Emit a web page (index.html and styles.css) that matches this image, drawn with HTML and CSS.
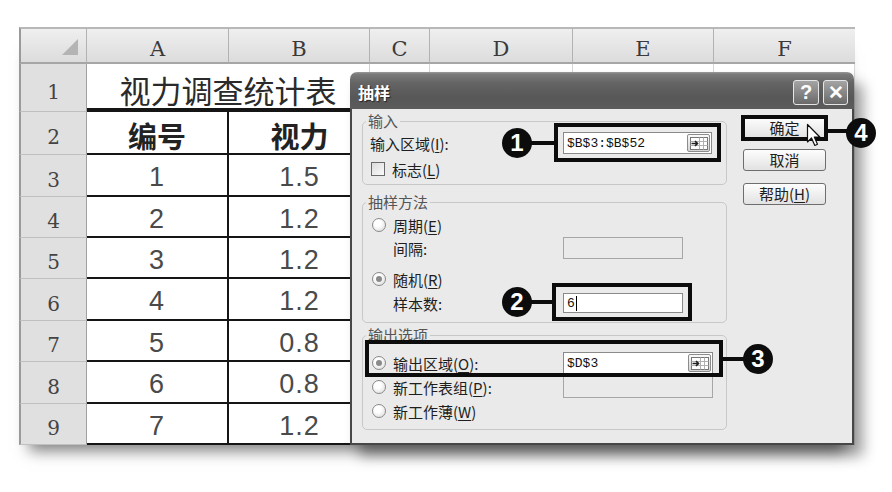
FILE: index.html
```html
<!DOCTYPE html>
<html lang="zh-CN">
<head>
<meta charset="utf-8">
<title>抽样</title>
<link rel="stylesheet" href="styles.css">
</head>
<body>
<div class="page">
  <div class="sheet">
    <div class="corner"><span class="tri"></span></div>
    <div class="ch">A</div><div class="ch">B</div><div class="ch">C</div><div class="ch">D</div><div class="ch">E</div><div class="ch last">F</div>

    <div class="rh">1</div>
    <div class="title">视力调查统计表</div>
    <div class="e"></div><div class="e"></div><div class="e"></div><div class="e"></div>

    <div class="rh">2</div>
    <div class="c ca hd">编号</div><div class="c hd">视力</div>
    <div class="e"></div><div class="e"></div><div class="e"></div><div class="e"></div>

    <div class="rh">3</div>
    <div class="c ca num">1</div><div class="c num">1.5</div>
    <div class="e"></div><div class="e"></div><div class="e"></div><div class="e"></div>

    <div class="rh">4</div>
    <div class="c ca num">2</div><div class="c num">1.2</div>
    <div class="e"></div><div class="e"></div><div class="e"></div><div class="e"></div>

    <div class="rh">5</div>
    <div class="c ca num">3</div><div class="c num">1.2</div>
    <div class="e"></div><div class="e"></div><div class="e"></div><div class="e"></div>

    <div class="rh">6</div>
    <div class="c ca num">4</div><div class="c num">1.2</div>
    <div class="e"></div><div class="e"></div><div class="e"></div><div class="e"></div>

    <div class="rh">7</div>
    <div class="c ca num">5</div><div class="c num">0.8</div>
    <div class="e"></div><div class="e"></div><div class="e"></div><div class="e"></div>

    <div class="rh">8</div>
    <div class="c ca num">6</div><div class="c num">0.8</div>
    <div class="e"></div><div class="e"></div><div class="e"></div><div class="e"></div>

    <div class="rh">9</div>
    <div class="c ca num">7</div><div class="c num">1.2</div>
    <div class="e"></div><div class="e"></div><div class="e"></div><div class="e"></div>
  </div>

  <div class="dialog">
    <div class="tbar">
      <span class="dtitle">抽样</span>
      <div class="tbtns"><span class="tbtn">?</span><span class="tbtn x">✕</span></div>
    </div>
    <div class="dbody">
      <div class="groups">
        <fieldset class="g g1">
          <legend>输入</legend>
          <div class="row h28"><span class="lab">输入区域(<u>I</u>):</span><span class="tb w149"><span class="val">$B$3:$B$52</span><span class="rb"><svg width="18" height="13" viewBox="0 0 18 13"><rect x="0.5" y="0.5" width="17" height="12" fill="#fff" stroke="#777"/><path d="M0.5 4.5h17M0.5 8.5h17M9.5 .5v12M13.5 .5v12" stroke="#b0b0b0" fill="none"/><path d="M1.5 6.5h5.5M5 4l2.5 2.5L5 9" stroke="#222" stroke-width="1.6" fill="none"/></svg></span></span></div>
          <div class="row h24"><span class="chk"></span><span>标志(<u>L</u>)</span></div>
        </fieldset>
        <fieldset class="g g2">
          <legend>抽样方法</legend>
          <div class="row h24"><span class="radio"></span><span>周期(<u>E</u>)</span></div>
          <div class="row h22"><span class="lab ind">间隔:</span><span class="tb dis w120"></span></div>
          <div class="row h24 mt8"><span class="radio on"></span><span>随机(<u>R</u>)</span></div>
          <div class="row h24"><span class="lab ind">样本数:</span><span class="tb w120 h20"><span class="val">6</span><span class="caret"></span></span></div>
        </fieldset>
        <fieldset class="g g3">
          <legend>输出选项</legend>
          <div class="row h24"><span class="lab"><span class="radio on"></span>输出区域(<u>O</u>):</span><span class="tb w150"><span class="val">$D$3</span><span class="rb"><svg width="18" height="13" viewBox="0 0 18 13"><rect x="0.5" y="0.5" width="17" height="12" fill="#fff" stroke="#777"/><path d="M0.5 4.5h17M0.5 8.5h17M9.5 .5v12M13.5 .5v12" stroke="#b0b0b0" fill="none"/><path d="M1.5 6.5h5.5M5 4l2.5 2.5L5 9" stroke="#222" stroke-width="1.6" fill="none"/></svg></span></span></div>
          <div class="row h24"><span class="lab"><span class="radio"></span>新工作表组(<u>P</u>):</span><span class="tb dis w150"></span></div>
          <div class="row h24"><span class="radio"></span><span>新工作薄(<u>W</u>)</span></div>
        </fieldset>
      </div>
      <div class="btns">
        <span class="btn">确定</span>
        <span class="btn">取消</span>
        <span class="btn b3rd">帮助(<u>H</u>)</span>
      </div>
    </div>
  </div>

  <div class="box b1"></div><div class="ln l1"></div><div class="mark n1">1</div>
  <div class="box b2"></div><div class="ln l2"></div><div class="mark n2">2</div>
  <div class="box b3"></div><div class="ln l3"></div><div class="mark n3">3</div>
  <div class="box b4"></div><div class="ln l4"></div><div class="mark n4">4</div>
  <svg class="cursor" width="16" height="26" viewBox="0 0 16 26"><path d="M1.5 1.5 L1.5 19 L5.5 15 L8.8 22.5 L11.5 21.3 L8.3 14 L13.8 14 Z" fill="#fff" stroke="#111" stroke-width="1.2" stroke-linejoin="round"/></svg>
</div>
</body>
</html>
```

FILE: styles.css
```css
* { box-sizing: border-box; margin: 0; padding: 0; }
html, body { width: 892px; height: 492px; overflow: hidden; background: #fff; }
body { font-family: "Noto Sans CJK SC", "Noto Sans", sans-serif; color: #222; }

.page { position: relative; width: 892px; height: 492px; padding: 27px 0 0 19px; }

/* spreadsheet */
.sheet {
  width: 836px;
  display: grid;
  grid-template-columns: 68px 142px 141px 60px 143px 141px 141px;
  grid-template-rows: 37px 48px 43px 42px 41px 41px 42px 41px 42px 41px;
  box-shadow: 0 16px 14px -10px rgba(0,0,0,.5);
}
.corner, .ch {
  background: linear-gradient(#efefef, #dcdcdc);
  border-top: 2px solid #b8b8b8;
  border-bottom: 2px solid #a6a6a6;
  border-right: 1px solid #b2b2b2;
}
.corner { border-left: 2px solid #9a9a9a; display: flex; justify-content: flex-end; align-items: flex-end; padding: 0 8px 7px 0; }
.tri { width: 16px; height: 16px; background: #b4b4b4; clip-path: polygon(100% 0, 100% 100%, 0 100%); }
.ch { display: flex; justify-content: center; align-items: center; padding-top: 7px; font: 21px "DejaVu Serif", "Liberation Serif", serif; color: #3a3a3a; }
.ch.last { border-right: 0; }
.rh {
  background: #e0e0e0;
  border-left: 2px solid #9a9a9a;
  border-right: 1px solid #a0a0a0;
  border-bottom: 1px solid #c0c0c0;
  display: flex; justify-content: center; align-items: center;
  padding-top: 8px;
  font: 20px "DejaVu Serif", "Liberation Serif", serif; color: #444;
}
.title {
  grid-column: span 2;
  border-bottom: 4px solid #151515;
  border-right: 1px solid #d0d0d0;
  display: flex; justify-content: center; align-items: center;
  padding-top: 6px;
  font-size: 31px; color: #2a2a2a;
}
.e { border-right: 1px solid #d6d6d6; border-bottom: 1px solid #d6d6d6; }
.c { border-bottom: 2px solid #151515; display: flex; justify-content: center; align-items: center; padding-top: 5px; }
.ca { border-right: 2px solid #151515; }
.hd { font-size: 29px; font-weight: 700; color: #222; }
.num { font: 27px "Liberation Sans", sans-serif; color: #4a4a4a; letter-spacing: 1px; }

/* dialog */
.dialog {
  position: absolute; left: 350px; top: 72px; width: 504px; height: 373px;
  display: flex; flex-direction: column;
  border-radius: 7px 7px 0 0;
  box-shadow: 9px 11px 14px rgba(0,0,0,.38);
}
.tbar {
  height: 37px; flex: none;
  display: flex; justify-content: space-between; align-items: flex-start;
  padding: 8px 6px 0 8px;
  border-radius: 7px 7px 0 0;
  background: linear-gradient(#9a9a9a 0, #7a7a7a 6%, #646464 30%, #575757 70%, #5c5c5c 100%);
}
.dtitle { font-size: 16px; font-weight: 700; line-height: 25px; color: #fff; text-shadow: 1px 1px 1px #222; }
.tbtns { display: flex; gap: 4px; }
.tbtn {
  width: 26px; height: 25px;
  border: 1px solid #e6e6e6; border-radius: 3px;
  background: linear-gradient(#a4a4a4, #6a6a6a);
  color: #fff; font: 700 20px/23px "Liberation Sans", sans-serif; text-align: center;
}
.tbtn.x { width: 25px; font-size: 19px; }
.dbody {
  flex: 1; display: flex; gap: 16px;
  padding: 4px 0 0 10px;
  background: #eaeaea;
  border: 2px solid #474747; border-top: 0;
}
.groups { width: 365px; flex: none; }
.g { border: 1px solid #c8c8c8; border-radius: 5px; padding: 0 7px; min-width: 0; }
.g legend { font-size: 15px; line-height: 16px; color: #555; padding: 0 2px; margin-left: -4px; }
.g1 { padding-bottom: 3px; }
.g2 { margin-top: 9px; padding-top: 3px; padding-bottom: 7px; }
.g3 { margin-top: 4px; padding-top: 8px; padding-bottom: 6px; }
.row { display: flex; align-items: center; font-size: 15px; color: #1e1e1e; white-space: nowrap; }
.h28 { height: 28px; }
.h24 { height: 24px; }
.h22 { height: 22px; }
.mt8 { margin-top: 8px; }
.lab { width: 193px; flex: none; display: flex; align-items: center; }
.lab.ind { padding-left: 23px; }
u { text-decoration-thickness: 1px; text-underline-offset: 2px; }

.tb { height: 22px; border: 1px solid #8a8a8a; background: #fff; display: flex; align-items: center; padding-left: 3px; font: 13px "Liberation Mono", monospace; color: #111; }
.tb.dis { background: #eaeaea; border-color: #a6a6a6; }
.w149 { width: 149px; }
.w150 { width: 150px; }
.w120 { width: 120px; }
.h20 { height: 20px; }
.caret { width: 1.5px; height: 15px; background: #000; margin-left: 1px; }
.rb {
  margin-left: auto; margin-right: 1px;
  width: 23px; height: 18px;
  border: 1px solid #8c8c8c; border-radius: 2px;
  background: linear-gradient(#fafafa, #d4d4d4);
  display: flex; align-items: center; justify-content: center;
}

.chk { width: 14px; height: 14px; border: 1px solid #6a6a6a; background: linear-gradient(135deg, #dcdcdc, #fafafa); margin: 0 7px 0 1px; }
.radio {
  width: 14px; height: 14px; flex: none;
  border-radius: 50%; border: 1px solid #8a8a8a;
  background: radial-gradient(circle at 40% 35%, #fff 30%, #d6d6d6);
  margin: 0 7px 0 2px;
  display: flex; align-items: center; justify-content: center;
}
.radio.on::after { content: ""; width: 6px; height: 6px; border-radius: 50%; background: #8a8a8a; }

.btns { width: 83px; flex: none; display: flex; flex-direction: column; gap: 10px; margin-top: 4px; }
.btn {
  height: 22px;
  border: 1px solid #6e6e6e; border-radius: 3px;
  background: linear-gradient(#fdfdfd, #e2e2e2);
  font-size: 15px; line-height: 20px; text-align: center; color: #1e1e1e;
}
.b3rd { margin-top: 2px; }

/* callouts */
.box { position: absolute; border: 4px solid #0c0c0c; }
.b1 { left: 554px; top: 123px; width: 167px; height: 39px; }
.b2 { left: 552px; top: 283px; width: 140px; height: 38px; }
.b3 { left: 365px; top: 340px; width: 358px; height: 37px; }
.b4 { left: 741px; top: 115px; width: 87px; height: 26px; }
.ln { position: absolute; height: 4px; background: #0c0c0c; }
.l1 { left: 530px; top: 141px; width: 25px; }
.l2 { left: 530px; top: 300px; width: 23px; }
.l3 { left: 722px; top: 357px; width: 24px; }
.l4 { left: 827px; top: 129px; width: 21px; }
.mark {
  position: absolute; width: 30px; height: 30px; border-radius: 50%;
  background: #0c0c0c; color: #fff;
  font: 700 24px/30px "Liberation Sans", sans-serif; text-align: center;
}
.n1 { left: 502px; top: 128px; }
.n2 { left: 502px; top: 287px; }
.n3 { left: 743px; top: 344px; }
.n4 { left: 846px; top: 118px; }
.cursor { position: absolute; left: 806px; top: 123px; }
```
